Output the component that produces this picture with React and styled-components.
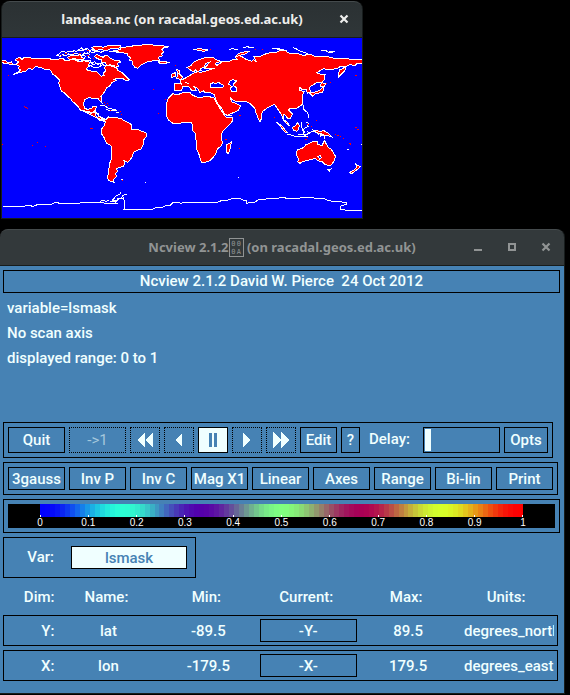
import React from "react";
import styled, { createGlobalStyle, css } from "styled-components";

const azure = "#f0ffff";
const steel = "#4682b4";

const GlobalStyle = createGlobalStyle`
  * { box-sizing: border-box; }
  body { margin: 0; background: #000; }
  button, input { font: inherit; color: inherit; margin: 0; }
`;

const Desktop = styled.main`
  display: flex;
  flex-direction: column;
  gap: 10px;
  padding: 1px 5px 5px 0;
  font-family: Roboto, "Liberation Sans", sans-serif;
`;

const Window = styled.section`
  border: solid #171c1c;
  border-width: 0 1px 1px 0;
  border-radius: 8px 8px 0 0;
`;

const MapWindow = styled(Window)`
  width: 100%;
  max-width: 362px;
  margin-left: 1px;
  border-left-width: 1px;
`;

const TitleBar = styled.header`
  display: grid;
  grid-template-columns: 1fr auto 1fr;
  align-items: center;
  height: 37px;
  padding-bottom: 1px;
  border-top: 1px solid #444a4c;
  border-bottom: 1px solid #171c1c;
  border-radius: 8px 8px 0 0;
  background: ${(p) => (p.$active ? "linear-gradient(#2b3133, #2f3638)" : "#33393b")};
  color: ${(p) => (p.$active ? "#eeeeec" : "#919494")};
`;

const Title = styled.h1`
  grid-column: 2;
  display: flex;
  align-items: center;
  margin: 0;
  font: 700 13px/20px "Noto Sans", "Open Sans", sans-serif;
  white-space: pre;
`;

const Missing = styled.span`
  display: grid;
  grid-template-columns: 1fr 1fr;
  width: 15px;
  height: 19px;
  padding: 1px;
  border: 1px solid currentColor;
  font: 7px/8px "DejaVu Sans Mono", monospace;
  text-align: center;
`;

const Controls = styled.div`
  display: flex;
  justify-content: flex-end;
  gap: 14px;
  padding-right: 8px;
`;

const Control = styled.button`
  display: grid;
  place-items: center;
  width: 20px;
  height: 20px;
  padding: 0;
  border: 0;
  background: none;
`;

const WorldMap = styled.svg`
  display: block;
  width: 100%;
  background: #00f;
`;

const Body = styled.div`
  padding: 4px 4px 8px 3px;
  background: ${steel};
  color: ${azure};
  font-size: 15px;
  font-weight: 500;
  line-height: 25px;
`;

const Banner = styled.h2`
  margin: 0;
  border: 1px solid #000;
  font-size: 15px;
  font-weight: 500;
  line-height: 21px;
  text-align: center;
  white-space: pre;
`;

const Messages = styled.div`
  min-height: 129px;
  padding: 3px 4px;
  p { margin: 0; }
`;

const Panel = styled.div`
  display: flex;
  gap: 4px;
  margin: 0 ${(p) => p.$end || 0}px 4px 0;
  padding: 4px;
  border: 1px solid #000;
`;

const Button = styled.button`
  flex: ${(p) => (p.$width ? `0 0 ${p.$width}px` : "1 1 0")};
  display: grid;
  place-items: center;
  min-width: 0;
  height: ${(p) => (p.$tall ? 26 : 23)}px;
  padding: 0;
  border: 1px solid #000;
  background: ${steel};
  color: ${azure};
  line-height: 20px;
  white-space: nowrap;
  overflow: hidden;
  ${(p) => p.$dotted && css`border-style: dotted;`}
  ${(p) => p.$on && css`background: ${azure}; color: ${steel};`}
  &:disabled { color: #a5c8dc; font-weight: 400; }
`;

const DelayLabel = styled.label`
  padding: 0 9px 0 5px;
  line-height: 24px;
`;

const Delay = styled.input`
  appearance: none;
  flex: 1;
  min-width: 0;
  height: 26px;
  padding: 0 1px;
  border: 1px solid #000;
  background: ${steel};
  &::-webkit-slider-thumb {
    appearance: none;
    width: 6px;
    height: 22px;
    background: ${azure};
  }
`;

const ColorBar = styled.div`
  flex: 1;
  height: 24px;
  padding: 0 32px;
  background: #000;
`;

const Ramp = styled.div`
  height: 13px;
  background: ${(p) => p.$fill};
`;

const Scale = styled.div`
  display: flex;
  justify-content: space-between;
  margin-top: -2px;
`;

const Tick = styled.span`
  display: flex;
  flex-direction: column;
  align-items: center;
  width: 0;
  color: #fff;
  font: 10px/12px "Liberation Sans", sans-serif;
  &::before {
    content: "";
    width: 1px;
    height: 2px;
    background: #fff;
  }
`;

const VarPanel = styled(Panel)`
  width: 193px;
  gap: 17px;
  padding: 8px;
  line-height: 23px;
`;

const VarLabel = styled.span`
  width: 42px;
  text-align: right;
`;

const Dims = styled.table`
  width: calc(100% - 2px);
  margin-top: -4px;
  table-layout: fixed;
  border-collapse: separate;
  border-spacing: 0 4px;
  text-align: center;
`;

const Head = styled.th`
  width: ${(p) => p.$width};
  height: 29px;
  padding: 2px 4px 0 0;
  font-weight: 500;
  text-align: ${(p) => (p.$right ? "right" : "center")};
`;

const Cell = styled.td`
  height: 31px;
  padding: 0;
  border: solid #000;
  border-width: 1px 0;
  line-height: 20px;
  &:first-child { border-left-width: 1px; padding-right: 4px; text-align: right; }
  &:last-child { border-right-width: 1px; padding: 0 3px 0 6px; text-align: left; }
`;

const Clip = styled.div`
  overflow: hidden;
  white-space: nowrap;
`;

const AxisButton = styled(Button)`
  width: 97%;
  margin: 0 auto;
`;

const steps = 97;
const rampFill = `linear-gradient(to right, ${Array.from({ length: steps }, (_, i) => {
  const t = i / (steps - 1);
  const red = Math.round(255 * t);
  const green = Math.round(255 * Math.sin(3 * Math.PI * t) ** 2);
  const from = ((i / steps) * 100).toFixed(2);
  const to = (((i + 1) / steps) * 100).toFixed(2);
  return `rgb(${red},${green},${255 - red}) ${from}% ${to}%`;
}).join(", ")})`;

const ticks = ["0", "0.1", "0.2", "0.3", "0.4", "0.5", "0.6", "0.7", "0.8", "0.9", "1"];
const options = ["3gauss", "Inv P", "Inv C", "Mag X1", "Linear", "Axes", "Range", "Bi-lin", "Print"];
const dims = [
  { dim: "Y", name: "lat", min: "-89.5", max: "89.5", units: "degrees_north" },
  { dim: "X", name: "lon", min: "-179.5", max: "179.5", units: "degrees_east" },
];

const land = [
  // North and Central America
  "M50 175L60 172 66 178 72 172 90 172 96 176 150 175 154 179 190 176 194 181 228 179 232 185 262 183 270 188 265 194 268 198 259 206 264 211 276 214 290 216 298 222 304 229 312 226 310 219 318 212 314 204 318 195 326 194 332 190 340 200 350 203 354 212 364 216 372 224 380 231 388 240 376 241 368 235 350 234 342 238 350 241 336 248 330 257 320 263 316 272 303 290 306 308 299 303 294 294 276 295 268 292 254 299 250 312 254 325 262 328 274 326 280 318 290 319 286 331 280 336 296 340 294 352 300 358 318 360 312 366 290 340 276 338 262 334 242 331 234 320 227 312 218 305 212 296 200 286 193 278 184 274 180 262 176 250 178 240 172 234 164 226 158 224 154 214 148 208 134 208 122 202 106 200 98 208 86 206 76 214 60 217 40 224 64 210 54 206 58 198 46 193 58 186 46 180Z",
  "M243 330L256 334 274 340 286 336 289 352 302 350 318 358 330 361 300 362 293 355 262 340Z",
  // Greenland
  "M345 152L362 148 360 144 374 142 384 140 396 140 400 135 424 136 436 132 458 135 478 136 508 140 492 143 486 148 492 156 484 162 487 168 474 172 478 180 462 180 454 184 440 186 428 192 420 198 413 205 404 202 396 190 398 184 388 180 392 174 384 168 382 160 362 158Z",
  // South America
  "M297 358L300 353 318 358 326 351 334 354 346 353 364 355 372 362 388 369 396 376 394 388 412 388 436 398 441 402 438 411 430 421 429 434 423 447 410 451 400 458 398 468 388 483 382 487 371 482 375 490 370 499 358 502 349 507 353 514 346 521 350 528 342 537 338 544 345 548 326 542 321 531 326 521 324 508 330 500 327 493 333 482 334 438 319 429 313 414 305 402 304 388 313 377 316 364 312 359Z",
  // Africa
  "M505 294L518 281 534 284 546 279 570 276 573 283 592 292 600 294 612 290 628 290 642 294 648 305 654 316 662 329 672 343 678 352 698 353 696 365 681 381 668 394 664 405 667 430 662 440 652 446 648 460 640 472 630 482 614 488 604 486 596 460 588 443 590 428 585 410 588 402 580 395 576 388 578 374 574 368 554 366 540 370 520 371 506 360 498 346 500 330 498 316Z",
  // Eurasia
  "M522 252L536 250 544 252 540 240 554 236 562 230 570 226 578 220 590 217 588 209 580 216 570 209 561 202 574 196 580 187 596 179 616 173 640 173 648 179 664 184 646 190 650 197 660 190 668 184 684 186 700 178 712 179 706 170 712 164 726 170 738 178 756 184 760 178 768 184 762 170 778 170 790 164 806 159 830 157 844 150 856 151 862 158 878 162 890 160 910 166 930 163 950 171 976 168 1000 174 1040 174 1050 179 1086 177 1086 192 1070 191 1064 197 1050 194 1038 200 1034 212 1024 222 1015 232 1018 210 1028 206 1034 200 1020 200 1010 206 988 209 970 206 950 218 964 224 975 224 972 240 964 248 950 248 940 254 928 262 932 277 922 280 918 268 906 270 900 262 898 270 912 275 907 286 909 300 906 314 888 326 870 324 866 330 878 342 872 354 862 354 852 341 850 360 860 364 868 377 859 370 850 358 842 340 832 326 824 313 814 318 804 322 788 334 783 344 784 356 780 366 774 354 768 338 764 324 752 312 740 306 710 305 696 298 690 292 696 306 706 309 722 318 716 330 700 338 682 346 674 342 666 326 656 316 646 297 644 285 630 277 616 278 610 272 600 278 594 266 582 260 590 272 576 272 566 260 548 260 544 272 522 272Z",
  // Australia and neighbours
  "M890 454L894 448 904 446 914 440 918 434 928 430 940 424 954 426 952 432 966 438 973 421 980 434 984 442 994 448 1000 458 1006 468 1004 480 994 495 984 496 974 493 966 485 960 486 952 480 946 476 932 478 920 482 908 484 900 490 893 486 896 478 889 464Z",
  "M982 508L992 507 988 514Z",
  "M1066 490L1072 497 1082 499 1070 510 1054 522 1048 518 1062 510 1070 502Z",
  "M878 382L888 376 892 368 898 376 896 388 890 394 880 390Z",
  "M830 366L846 378 862 398 856 398 842 380Z",
  "M940 390L958 394 972 392 986 400 996 411 980 406 962 408 960 400 946 398Z",
  "M678 435L688 430 694 425 692 442 686 460 679 458Z",
  // British Isles and Japan
  "M530 208L540 214 536 220 548 232 544 238 528 236 534 226Z",
  "M516 222L526 218 526 230 514 232Z",
  "M964 248L976 250 974 258 962 258Z",
  "M970 260L972 270 966 278 948 280 938 288 930 280 946 276 960 270Z",
  "M0 180L16 181 22 188 34 186 38 192 28 192 12 190 6 186Z",
  "M474 186L486 184 506 187 494 192 480 190Z",
  // Arctic islands
  "M290 163L300 168 310 172 316 166 324 168 330 174 342 180 358 182 362 186 352 190 356 198 346 202 334 196 322 198 316 188 304 188 306 180 292 176 284 170Z",
  "M274 142L290 138 310 142 328 136 362 138 356 145 332 146 320 152 300 148 286 152Z",
  "M202 172L214 166 226 168 240 164 246 172 254 176 240 180 222 176 208 178Z",
  "M704 172L716 160 732 156 748 154 736 162 718 166Z",
  "M580 148L600 146 624 150 612 154Z",
  "M822 144L836 146 860 152 844 152Z",
];

const inland = [
  "M630 252L640 248 646 252 656 246 662 252 672 256 668 262 646 264 632 262Z",
  "M688 244L698 239 710 243 702 250 700 256 708 262 708 274 694 274 692 264 696 260 686 252Z",
  "M602 206L612 202 618 190 630 186 614 204 646 204 622 212 600 218 592 214 604 212Z",
  "M954 470L960 466 964 472 960 478Z",
  "M272 196L284 192 300 190 304 196 296 202 280 202Z",
];

const coast = [
  "M170 164l8-2 4-6 10-3 6 5 8-5 10 3 6-4 8 2 8-4 10 3 6-5 12 4 10-3 8 6 12-2 6 4 10-4",
  "M168 166l12 3 8-5 10 4 8-6 12 2 10-5 12 5 8 2 4-6 10 2 8-5",
  "M236 150l8-6 6 5 10-4 6 3m-12 8l-6 8 8 4-2 8m8-18l6 4-4 8 8 6m-4-22l10 5 6-3m-62 22l8 4 12-3 8 4 10-2",
  "M260 180l10 2 6 8 8-5 8 9 12-6 8 8 10-2m4-42l8 4 12-3 6 5 8 1m-32 32l6 8 10-2",
  "M688 148l12-2 4 3 10-2m16-5l14-2 4 3 14-1m54 2l14 0m48-1l14 5 10 7 12 2 10 4m40-10l12-1 8 6h14m-12-3l20 1",
  "M300 318l12-2 12 8 24 6m-30-2l14 4 20-2m-4 6h10",
  "M862 402l20 6 20 2 22-2m-30-4l26-1 14-5M908 384l2 16m2-14l14-8m-6 14l10 8m-20 0l8 10m-14-44l0 16 8 10 2 8",
  "M910 316l1 12 12 10 4 16m-8 14l8 2-4 8",
  "M974 418l-1-12-13-6m-26-4l10-4 14 12",
  "M1040 446l8 4m34-14l4-4M677 348l18-2",
  "M10 620H72l8-4h14l2 4 16-6h40l8-4 8-4 10 4h60l8-4h60l8 4h36l-12-8h12l4-8 10 2 4-10 12-4m-50 24l12-4 8 2 6-8h14l4 6-2 26h84l8-4 22-2 10-4 14-2 8-8 16-1 8 3 12-4h100l10-4h14l10-4 10-2h22l14 6 6 1v8l8-4h16l12-8h12l10-2 10-2h28l4-4h14l4 4h40l4-2h16l8-2 20 4h24l12 6 20 4h20l10 2h6v6l-10 4-8 2v8l10 2 12 2H1086",
  "M300 604l10-4 8 4 8-2m12-2l10-12 12-6v-6m8 16h4",
  "M364 538l4 2m66 8h3m276-16h4M556 248l10 2",
];

const islets = [
  [72, 318], [76, 322], [80, 325], [24, 226], [270, 385], [274, 385], [110, 426], [96, 436], [135, 438], [5, 433],
  [330, 330], [360, 334], [312, 306], [320, 310], [324, 316], [314, 312], [362, 342], [366, 540], [458, 267],
  [474, 340], [494, 298], [524, 195], [676, 418], [716, 444], [718, 345], [822, 352], [948, 361], [1066, 226],
  [1004, 402], [1012, 406], [1020, 408], [1028, 414], [1048, 428], [1050, 432], [1066, 380], [1072, 388],
  [990, 246], [978, 250], [922, 372], [932, 378], [954, 390], [630, 148], [764, 146], [786, 148], [920, 410],
  [916, 416], [196, 160], [218, 158], [238, 158], [262, 166], [278, 174], [262, 150], [182, 164], [250, 184],
];

function LandSea() {
  return (
    <WorldMap viewBox="6 114 1080 540" shapeRendering="crispEdges" role="img" aria-label="Land-sea mask">
      <g fill="#f00" stroke="#fff" strokeWidth="3">
        {land.map((d) => <path key={d} d={d} />)}
      </g>
      <g fill="#00f" stroke="#fff" strokeWidth="3">
        {inland.map((d) => <path key={d} d={d} />)}
      </g>
      <g fill="none" stroke="#fff" strokeWidth="3">
        {coast.map((d) => <path key={d} d={d} />)}
      </g>
      <g fill="#f00">
        {islets.map(([x, y]) => <rect key={`${x}-${y}`} x={x} y={y} width="4" height="3" />)}
      </g>
    </WorldMap>
  );
}

function CloseIcon() {
  return (
    <svg width="10" height="10" viewBox="0 0 10 10" aria-hidden="true">
      <path d="M1.5 1.5l7 7m0-7l-7 7" stroke="currentColor" strokeWidth="2.2" />
    </svg>
  );
}

const shapes = {
  rewind: { label: "Fast backward", d: "M9 1v16L1 9zM17 1v16L9 9z" },
  back: { label: "Backward", d: "M12 2v14L5 9z" },
  pause: { label: "Pause", d: "M5 2h3v14H5zM10 2h3v14h-3z" },
  play: { label: "Forward", d: "M5 2v14l7-7z" },
  forward: { label: "Fast forward", d: "M1 1v16l8-8zM9 1v16l8-8z" },
};

function Transport({ kind, on }) {
  return (
    <Button type="button" $tall $width={30} $dotted={!on} $on={on} aria-label={shapes[kind].label}>
      <svg width="18" height="18" viewBox="0 0 18 18" shapeRendering="crispEdges" aria-hidden="true">
        <path d={shapes[kind].d} fill="currentColor" />
      </svg>
    </Button>
  );
}

export default function App() {
  return (
    <Desktop>
      <GlobalStyle />
      <MapWindow>
        <TitleBar $active>
          <Title>landsea.nc (on racadal.geos.ed.ac.uk)</Title>
          <Controls>
            <Control type="button" aria-label="Close"><CloseIcon /></Control>
          </Controls>
        </TitleBar>
        <LandSea />
      </MapWindow>

      <Window>
        <TitleBar>
          <Title>
            Ncview 2.1.2
            <Missing><span>0</span><span>0</span><span>0</span><span>A</span></Missing>
            {" (on racadal.geos.ed.ac.uk)"}
          </Title>
          <Controls>
            <Control type="button" aria-label="Minimize">
              <svg width="10" height="10" viewBox="0 0 10 10" aria-hidden="true">
                <path d="M1 7h8v2H1z" fill="currentColor" />
              </svg>
            </Control>
            <Control type="button" aria-label="Maximize">
              <svg width="10" height="10" viewBox="0 0 10 10" aria-hidden="true">
                <path d="M2 2h6v6H2z" fill="none" stroke="currentColor" strokeWidth="2" />
              </svg>
            </Control>
            <Control type="button" aria-label="Close"><CloseIcon /></Control>
          </Controls>
        </TitleBar>
        <Body>
          <Banner>{"Ncview 2.1.2 David W. Pierce  24 Oct 2012"}</Banner>
          <Messages>
            <p>variable=lsmask</p>
            <p>No scan axis</p>
            <p>displayed range: 0 to 1</p>
          </Messages>

          <Panel $end={7}>
            <Button type="button" $tall $width={57}>Quit</Button>
            <Button type="button" $tall $width={57} $dotted disabled>{"->1"}</Button>
            <Transport kind="rewind" />
            <Transport kind="back" />
            <Transport kind="pause" on />
            <Transport kind="play" />
            <Transport kind="forward" />
            <Button type="button" $tall $width={37}>Edit</Button>
            <Button type="button" $tall $width={19}>?</Button>
            <DelayLabel htmlFor="delay">Delay:</DelayLabel>
            <Delay id="delay" type="range" min="0" max="100" defaultValue="0" />
            <Button type="button" $tall $width={44}>Opts</Button>
          </Panel>

          <Panel $end={2}>
            {options.map((name) => <Button type="button" key={name}>{name}</Button>)}
          </Panel>

          <Panel>
            <ColorBar>
              <Ramp $fill={rampFill} />
              <Scale>{ticks.map((t) => <Tick key={t}>{t}</Tick>)}</Scale>
            </ColorBar>
          </Panel>

          <VarPanel>
            <VarLabel id="var-label">Var:</VarLabel>
            <Button type="button" $on aria-describedby="var-label">lsmask</Button>
          </VarPanel>

          <Dims>
            <thead>
              <tr>
                <Head $width="10%" $right>Dim:</Head>
                <Head $width="18%">Name:</Head>
                <Head $width="18%">Min:</Head>
                <Head $width="18%">Current:</Head>
                <Head $width="18%">Max:</Head>
                <Head $width="18%">Units:</Head>
              </tr>
            </thead>
            <tbody>
              {dims.map((d) => (
                <tr key={d.dim}>
                  <Cell>{d.dim}:</Cell>
                  <Cell>{d.name}</Cell>
                  <Cell>{d.min}</Cell>
                  <Cell><AxisButton type="button">-{d.dim}-</AxisButton></Cell>
                  <Cell>{d.max}</Cell>
                  <Cell><Clip>{d.units}</Clip></Cell>
                </tr>
              ))}
            </tbody>
          </Dims>
        </Body>
      </Window>
    </Desktop>
  );
}
